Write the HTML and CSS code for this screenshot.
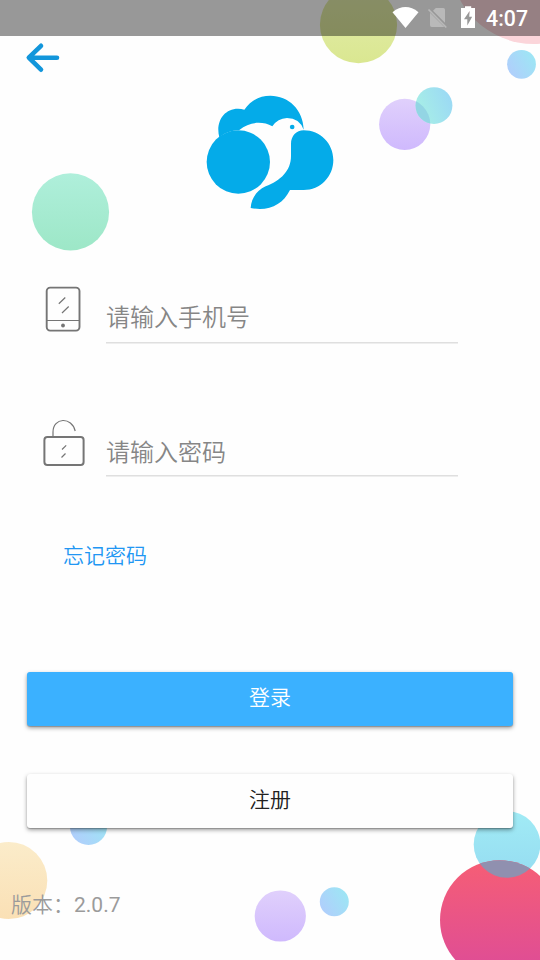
FILE: index.html
```html
<!DOCTYPE html>
<html lang="zh-CN">
<head>
<meta charset="utf-8">
<title>登录</title>
<link rel="stylesheet" href="styles.css">
</head>
<body>
<div class="screen">
  <svg class="bubbles" viewBox="0 0 540 960" aria-hidden="true">
    <defs>
      <linearGradient id="lime" x2="0" y2="1"><stop stop-color="#e4edad"/><stop offset="1" stop-color="#dae791"/></linearGradient>
      <linearGradient id="purple" x2="0" y2="1"><stop stop-color="#e0d0fc"/><stop offset="1" stop-color="#cfb9fd"/></linearGradient>
      <linearGradient id="green" x2="0" y2="1"><stop stop-color="#afefdb"/><stop offset="1" stop-color="#9de7c7"/></linearGradient>
      <linearGradient id="orange" x2="0" y2="1"><stop stop-color="#fbecca"/><stop offset="1" stop-color="#fae0b5"/></linearGradient>
      <linearGradient id="cyan" x2="0" y2="1"><stop stop-color="#a1ebf5"/><stop offset="1" stop-color="#95dcf1"/></linearGradient>
      <linearGradient id="red" x2="0" y2="1"><stop stop-color="#f65e75"/><stop offset="1" stop-color="#dc4b99"/></linearGradient>
      <linearGradient id="blue" x1="0" y1=".8" x2="1" y2=".2"><stop stop-color="#b1cdfc"/><stop offset="1" stop-color="#9ce7f4"/></linearGradient>
      <linearGradient id="teal" x1="0" y1=".7" x2="1" y2=".3"><stop stop-color="#a8f0e5"/><stop offset="1" stop-color="#9bd9f5"/></linearGradient>
      <clipPath id="tealClip"><circle cx="434" cy="105.6" r="18.4"/></clipPath>
      <clipPath id="cyanClip"><circle cx="507" cy="844.5" r="33.3"/></clipPath>
    </defs>
    <circle cx="358.5" cy="24.7" r="38.6" fill="url(#lime)"/>
    <circle cx="534" cy="-40" r="84" fill="#fbd5da"/>
    <circle cx="521.5" cy="64.3" r="14.4" fill="url(#blue)"/>
    <circle cx="404.7" cy="124.3" r="25.6" fill="url(#purple)"/>
    <circle cx="434" cy="105.6" r="18.4" fill="url(#teal)"/>
    <circle cx="404.7" cy="124.3" r="25.6" fill="#93d5e4" clip-path="url(#tealClip)"/>
    <circle cx="70.5" cy="211.9" r="38.6" fill="url(#green)"/>
    <circle cx="8.7" cy="880.5" r="38.6" fill="url(#orange)"/>
    <circle cx="88.5" cy="826.3" r="18.6" fill="url(#blue)"/>
    <circle cx="280.3" cy="916" r="25.6" fill="url(#purple)"/>
    <circle cx="334.3" cy="901.7" r="14.5" fill="url(#blue)"/>
    <circle cx="507" cy="844.5" r="33.3" fill="url(#cyan)"/>
    <circle cx="499.7" cy="920" r="59.7" fill="url(#red)"/>
    <circle cx="499.7" cy="920" r="59.7" fill="#9090af" clip-path="url(#cyanClip)"/>
  </svg>

  <header class="status">
    <svg class="status-icons" viewBox="390 0 90 36" aria-hidden="true">
      <path fill="#fff" d="M392.500 12.200Q405.500 2 418.500 12.200L405.500 28Z"/>
      <path fill="#b9b9b9" d="M435.800 8H443.300Q445 8 445 9.700V22.800L433 10.700ZM430 12.800L444.300 27H431.700Q430 27 430 25.300Z"/>
      <path stroke="#b9b9b9" stroke-width="1.700" d="M428.500 9.500L446.300 27.500"/>
      <path fill="#fff" fill-rule="evenodd" d="M465 6.200H471.200V8H475V28H461V8H465ZM469.600 11L464 19.300H467.300V25.500L472.200 16.800H469.200Z"/>
    </svg>
    <span class="clock">4:07</span>
  </header>

  <main class="page">
    <svg class="back" viewBox="24 40 38 34" role="img" aria-label="返回"><path d="M41 45.800L28.800 57.700L41 69.700M29 57.700H57"/></svg>

    <svg class="logo" viewBox="0 0 480 405" aria-hidden="true">
      <path fill="#04abe9" d="M88 157C76 113 100 71 144 71Q154 71 163 74C185 44 211 32 241 32C295 32 340 74 341 134Q328 99 291 99Q263 100 247 124C216 107 177 111 148 135Q110 137 88 157Z"/>
      <circle cx="145" cy="231" r="95" fill="#04abe9"/>
      <path fill="#04abe9" d="M341 136C391 136 430 176 430 225C430 275 391 315 341 315H300C278 360 235 380 182 369C184 341 199 317 227 304C272 287 303 257 303 213V177C303 153 319 136 341 136Z"/>
      <circle cx="306.500" cy="126" r="7" fill="#04abe9"/>
    </svg>

    <form class="form">
      <div class="field phone">
        <svg class="icon" viewBox="42 283 44 52" aria-hidden="true">
          <rect x="46.700" y="287.600" width="32.800" height="43" rx="3.500" stroke-width="1.900"/>
          <path stroke-width="1.200" d="M47 320.500H79M58.800 303.800L65.300 297.500M62 313L68.700 306.500"/>
          <circle class="dot" cx="63" cy="325.500" r="1.900"/>
        </svg>
        <input class="input" type="tel" placeholder="请输入手机号" aria-label="手机号">
      </div>
      <div class="field password">
        <svg class="icon" viewBox="42 417 44 52" aria-hidden="true">
          <rect x="44.400" y="437" width="39.200" height="27.900" rx="3" stroke-width="2"/>
          <path stroke-width="1.200" d="M53 436.500V432C53 417.200 72 416.500 75.200 431M62 449.500L66.200 445.300M61.500 457.500L65.500 453.500"/>
        </svg>
        <input class="input" type="password" placeholder="请输入密码" aria-label="密码">
      </div>
      <a class="forgot">忘记密码</a>
      <button class="button primary" type="button">登录</button>
      <button class="button" type="button">注册</button>
    </form>
    <footer class="version">版本：<span class="number">2.0.7</span></footer>
  </main>
</div>
</body>
</html>
```
FILE: styles.css
```css
* { box-sizing: border-box; }

body {
  margin: 0;
  background: #fefefe;
  font-family: Roboto, "Noto Sans CJK SC", sans-serif;
}

.screen {
  position: relative;
  width: 540px;
  height: 960px;
  overflow: hidden;
}

.bubbles {
  position: absolute;
  inset: 0;
  width: 540px;
  height: 960px;
}

.status {
  position: relative;
  display: flex;
  align-items: center;
  justify-content: flex-end;
  height: 36px;
  padding-right: 12px;
  background: rgba(0, 0, 0, .4);
}

.status-icons { width: 90px; height: 36px; }

.clock {
  width: 48px;
  white-space: nowrap;
  text-align: right;
  color: #fff;
  font-size: 21.300px;
  font-weight: 500;
  line-height: 36px;
  padding-top: 2px;
}

.page {
  position: relative;
  display: flex;
  flex-direction: column;
  height: 924px;
  padding-top: 4px;
}

.back {
  width: 38px;
  height: 34px;
  margin-left: 24px;
  fill: none;
  stroke: #1296db;
  stroke-width: 4.600;
  stroke-linecap: round;
  stroke-linejoin: round;
}

.logo {
  width: 160px;
  height: 135px;
  margin: 11px 0 0 190px;
}

.form {
  display: flex;
  flex-direction: column;
  padding: 0 27px;
}

.field {
  display: flex;
  align-items: flex-start;
  gap: 20px;
  padding-left: 15px;
}

.phone { margin-top: 63px; height: 60px; }
.password { margin-top: 74px; height: 59px; }

.icon {
  width: 44px;
  height: 52px;
  fill: none;
  stroke: #757575;
}

.icon .dot { fill: #757575; stroke: none; }

.input {
  width: 352px;
  height: 100%;
  padding: 10px 0 0;
  border: 0;
  border-bottom: 1px solid #dfdfdf;
  box-shadow: 0 1px #eee;
  outline: 0;
  background: none;
  font: 350 24px Roboto, "Noto Sans CJK SC", sans-serif;
}

.password .input { padding-top: 13px; }

.input::placeholder { color: #868686; opacity: 1; }

.forgot {
  align-self: flex-start;
  margin: 64px 0 0 36px;
  color: #2196f3;
  font-size: 21px;
  font-weight: 350;
  line-height: 32px;
}

.button {
  height: 54px;
  margin-top: 48px;
  padding: 0 0 3px;
  border: 0;
  border-radius: 3px;
  background: #fefefe;
  color: #212121;
  font: 350 21px/32px Roboto, "Noto Sans CJK SC", sans-serif;
  box-shadow: 0 2px 4px rgba(0, 0, 0, .38), 0 1px 1px rgba(0, 0, 0, .2);
}

.primary {
  margin-top: 100px;
  background: #3bb1ff;
  color: #fff;
}

.version {
  margin: 61px 0 0 11px;
  color: #9b9b9b;
  font-size: 21px;
  font-weight: 350;
  line-height: 32px;
}

.number { font-weight: 400; }
```
